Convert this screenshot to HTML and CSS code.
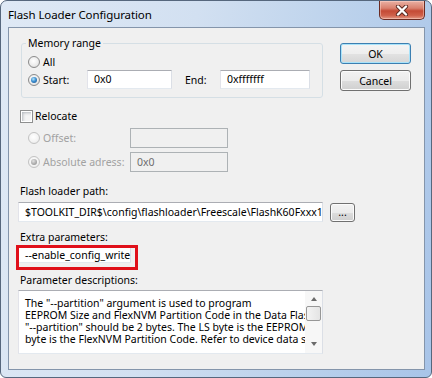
FILE: index.html
```html
<!DOCTYPE html>
<html>
<head>
<meta charset="utf-8">
<link rel="stylesheet" href="styles.css">
</head>
<body>
<div class="window">
  <div class="titlebar">
    <span class="title">Flash Loader Configuration</span>
    <div class="close">
      <svg width="14" height="11" viewBox="0 0 14 11">
        <path d="M3 1.5 L11 9.5 M11 1.5 L3 9.5" stroke="#5b2a22" stroke-width="4.2" stroke-linecap="round" fill="none"/>
        <path d="M3 1.5 L11 9.5 M11 1.5 L3 9.5" stroke="#ffffff" stroke-width="2.4" stroke-linecap="round" fill="none"/>
      </svg>
    </div>
  </div>
  <div class="client">
    <div class="top">
      <fieldset class="group">
        <legend>Memory range</legend>
        <div class="row r-all"><span class="radio"></span><span class="rlabel">All</span></div>
        <div class="row r-start">
          <span class="radio on"></span><span class="rlabel w-start">Start:</span>
          <span class="edit e-start">0x0</span>
          <span class="lbl-end">End:</span>
          <span class="edit e-end">0xfffffff</span>
        </div>
      </fieldset>
      <div class="buttons">
        <div class="btn default">OK</div>
        <div class="btn">Cancel</div>
      </div>
    </div>
    <div class="check-row"><span class="check"></span><span>Relocate</span></div>
    <div class="row sub disabled r-offset"><span class="radio"></span><span class="rlabel w-sub">Offset:</span><span class="edit dis e-sub"></span></div>
    <div class="row sub disabled r-abs"><span class="radio on"></span><span class="rlabel w-sub">Absolute adress:</span><span class="edit dis e-sub">0x0</span></div>
    <div class="label l-path">Flash loader path:</div>
    <div class="path-row">
      <span class="edit e-wide">$TOOLKIT_DIR$\config\flashloader\Freescale\FlashK60Fxxx1</span>
      <div class="btn small">...</div>
    </div>
    <div class="label l-extra">Extra parameters:</div>
    <div class="extra-row">
      <span class="edit e-wide">--enable_config_write</span>
      <div class="highlight"></div>
    </div>
    <div class="label l-desc">Parameter descriptions:</div>
    <div class="memo">
      <div class="memo-text">
        <div>The "--partition" argument is used to program</div>
        <div>EEPROM Size and FlexNVM Partition Code in the Data Flash</div>
        <div>"--partition" should be 2 bytes. The LS byte is the EEPROM</div>
        <div>byte is the FlexNVM Partition Code. Refer to device data sheet</div>
      </div>
      <div class="scrollbar">
        <div class="arrow up"></div>
        <div class="thumb"></div>
        <div class="track"></div>
        <div class="arrow down"></div>
      </div>
    </div>
  </div>
</div>
</body>
</html>
```
FILE: styles.css
```css
html, body {
  margin: 0;
  padding: 0;
  background: #ffffff;
}
body {
  font-family: "Noto Sans", "Open Sans", sans-serif;
  font-size: 10.5px;
  letter-spacing: 0;
  color: #000;
}
.window {
  box-sizing: border-box;
  width: 432px;
  height: 378px;
  border: 1px solid #56677d;
  border-radius: 7px 7px 6px 6px;
  background: linear-gradient(100deg, #dfe9f5 0%, #d2e0f1 40%, #bcd2ec 70%, #a8c4e8 100%);
  display: flex;
  flex-direction: column;
  overflow: hidden;
}
.titlebar {
  height: 26px;
  display: flex;
  align-items: flex-start;
}
.title {
  font-size: 11.5px;
  letter-spacing: -0.1px;
  line-height: 16px;
  margin: 6px 0 0 7px;
  color: #000;
}
.close {
  margin-left: auto;
  margin-right: 6px;
  width: 46px;
  height: 19px;
  box-sizing: border-box;
  border: 1px solid #6b2b22;
  border-top: none;
  border-radius: 0 0 5px 5px;
  background: linear-gradient(#eab1a4 0%, #d9806e 40%, #c44a35 55%, #cf604a 80%, #e49a86 100%);
  box-shadow: inset 0 0 0 1px rgba(255, 220, 210, 0.45);
  display: flex;
  align-items: center;
  justify-content: center;
}
.client {
  flex: 1;
  margin: 0 6px 7px 7px;
  border: 1px solid #8495ab;
  background: #f0f0f0;
  padding-left: 9px;
  display: flex;
  flex-direction: column;
  align-items: flex-start;
}
.top {
  display: flex;
  align-items: flex-start;
}
.group {
  box-sizing: border-box;
  width: 302px;
  margin: 8px 0 0 3px;
  padding: 4px 0 8px 6px;
  border: 1px solid #d5dfe5;
  border-radius: 3px;
  min-width: 0;
}
.group legend {
  line-height: 14px;
  padding: 0 2px;
  margin-left: -2px;
}
.buttons {
  margin: 15px 0 0 17px;
  display: flex;
  flex-direction: column;
  gap: 6px;
}
.btn {
  box-sizing: border-box;
  width: 71px;
  height: 21px;
  border: 1px solid #707070;
  border-radius: 3px;
  background: linear-gradient(#f2f2f2 0%, #ebebeb 50%, #dddddd 51%, #cfcfcf 100%);
  box-shadow: inset 0 0 0 1px #fbfbfb;
  display: flex;
  align-items: center;
  justify-content: center;
  line-height: 14px;
}
.btn.default {
  border-color: #3c7fb1;
  box-shadow: inset 0 0 0 1px #a9e3fa;
  background: linear-gradient(#f4f4f4 0%, #eeeeee 50%, #e2e2e2 51%, #d6d6d6 100%);
}
.btn.small {
  width: 25px;
  height: 19px;
  margin-left: 7px;
  margin-top: 1px;
  line-height: 10px;
  align-items: flex-end;
  padding-bottom: 4px;
}
.row {
  display: flex;
  align-items: center;
}
.r-all {
  height: 16px;
}
.r-start {
  height: 19px;
}
.radio {
  box-sizing: border-box;
  width: 12px;
  height: 12px;
  border-radius: 50%;
  border: 1px solid #8b8b8b;
  background: radial-gradient(circle at 45% 40%, #ffffff 0%, #ececec 55%, #cfcfcf 100%);
  display: inline-flex;
  align-items: center;
  justify-content: center;
  flex: none;
}
.radio.on::after {
  content: "";
  width: 6px;
  height: 6px;
  border-radius: 50%;
  background: radial-gradient(circle at 40% 35%, #b6e6fb 0%, #3d8fd0 45%, #174d86 100%);
}
.disabled .radio {
  border-color: #c2c2c2;
  background: radial-gradient(circle at 45% 40%, #ffffff 0%, #f2f2f2 60%, #e2e2e2 100%);
}
.disabled .radio.on::after {
  background: radial-gradient(circle at 40% 35%, #e2e2e2 0%, #a8a8a8 60%, #8c8c8c 100%);
}
.rlabel {
  margin-left: 3px;
  line-height: 14px;
}
.w-start {
  width: 44px;
}
.edit {
  box-sizing: border-box;
  height: 19px;
  border: 1px solid;
  border-color: #abadb3 #dbdfe6 #e3e9ef #e2e3ea;
  background: #ffffff;
  padding-left: 6px;
  line-height: 17px;
  white-space: nowrap;
  overflow: hidden;
}
.e-start {
  width: 85px;
}
.lbl-end {
  margin-left: 13px;
  width: 35px;
}
.e-end {
  width: 90px;
}
.check-row {
  display: flex;
  align-items: center;
  height: 16px;
  margin-top: 10px;
  padding-left: 2px;
}
.check {
  box-sizing: border-box;
  width: 13px;
  height: 13px;
  border: 1px solid #8e8f8f;
  background: #f4f4f4;
  box-shadow: inset 0 0 0 1px #ffffff, inset 2px 2px 3px #b3b8bd;
  margin-right: 2px;
}
.sub {
  height: 20px;
  margin-top: 4px;
  padding-left: 10px;
}
.disabled .rlabel {
  color: #a2a2a2;
}
.w-sub {
  width: 87px;
}
.edit.dis {
  background: #f0f0f0;
  border-color: #adb2b5;
  color: #6d6d6d;
  height: 20px;
  line-height: 18px;
}
.e-sub {
  width: 98px;
}
.label {
  line-height: 14px;
  padding-left: 2px;
}
.l-path {
  margin-top: 12px;
}
.path-row {
  display: flex;
  margin-top: 4px;
}
.e-wide {
  width: 305px;
  height: 20px;
  line-height: 18px;
}
.l-extra {
  margin-top: 8px;
}
.extra-row {
  position: relative;
  margin-top: 2px;
}
.highlight {
  position: absolute;
  left: -2px;
  top: -1px;
  width: 122px;
  height: 25px;
  box-sizing: border-box;
  border: 3px solid #e0101a;
}
.l-desc {
  margin-top: 9px;
}
.memo {
  box-sizing: border-box;
  width: 305px;
  height: 64px;
  margin-top: 3px;
  border: 1px solid;
  border-color: #abadb3 #dbdfe6 #e3e9ef #e2e3ea;
  background: #ffffff;
  display: flex;
}
.memo-text {
  flex: 1;
  min-width: 0;
  overflow: hidden;
  white-space: nowrap;
  padding: 6px 0 0 6px;
  line-height: 12px;
}
.scrollbar {
  width: 17px;
  display: flex;
  flex-direction: column;
  align-items: center;
  background: #f7f7f7;
}
.arrow {
  width: 0;
  height: 0;
  border-left: 3.5px solid transparent;
  border-right: 3.5px solid transparent;
}
.arrow.up {
  margin-top: 6px;
  border-bottom: 4px solid #6b6b6b;
}
.arrow.down {
  margin-bottom: 7px;
  border-top: 4px solid #6b6b6b;
}
.thumb {
  box-sizing: border-box;
  margin-top: 5px;
  width: 15px;
  height: 15px;
  border: 1px solid #979797;
  border-radius: 2px;
  background: linear-gradient(90deg, #f4f4f4, #e4e4e4);
}
.track {
  flex: 1;
}
```
